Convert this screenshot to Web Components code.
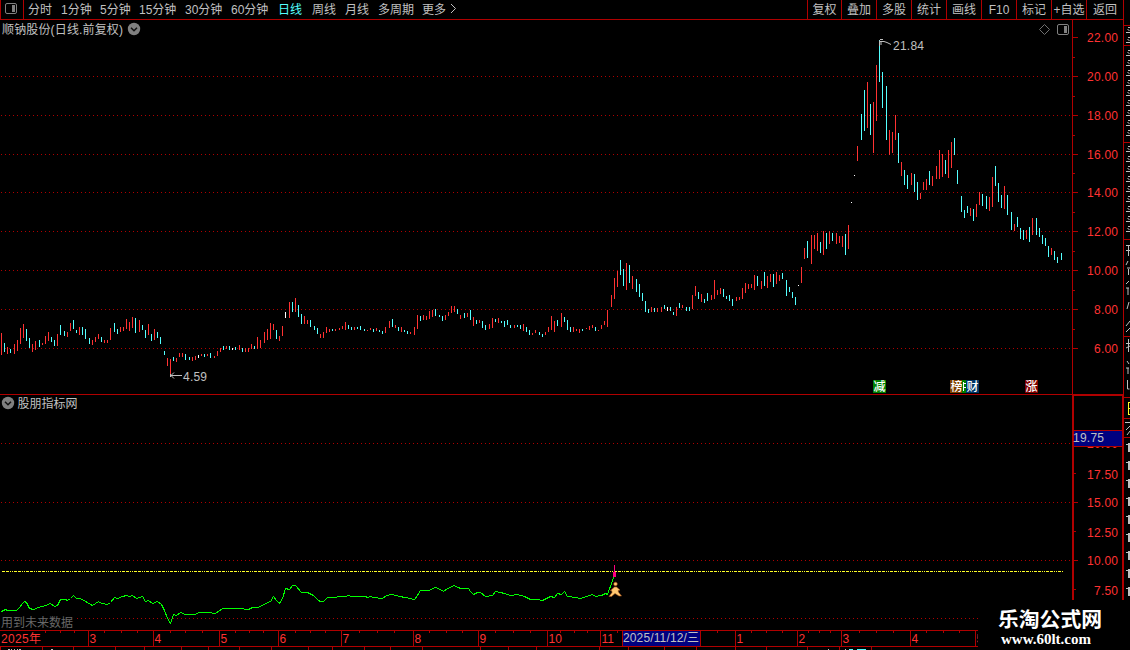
<!DOCTYPE html>
<html lang="zh-CN">
<head>
<meta charset="utf-8">
<title>顺钠股份</title>
<style>
    html, body {
        margin: 0;
        background: #000;
    }

    body {
        width: 1130px;
        height: 650px;
        overflow: hidden;
        color: #c0c0c0;
        font: 12px/16px "Liberation Sans", "Noto Sans CJK SC", sans-serif;
    }
</style>
</head>
<body>
<stock-terminal></stock-terminal>

<script>
// every chart svg uses page coordinates, the viewBox does the offset
const SVG_STYLE = `
    :host { display: block; overflow: hidden; }
    svg { display: block; }
    text { font: 12px "Liberation Sans", "Noto Sans CJK SC", sans-serif; fill: #c0c0c0; }
    .crisp { shape-rendering: crispEdges; }
    .axis { fill: #ff3232; }
`;

const RED = '#b00000';

// colour (r up, c down, w flat), x, top, bottom
const BARS = `
r1,333,355 c4,343,352 r7,347,354 c10,349,353 r14,344,354 r17,340,351 r20,328,344 r23,324,338
c26,329,341 c29,338,348 r32,344,352 r35,341,350 c39,340,347 r42,343,345 r45,336,344 r48,332,341
c51,337,342 c54,340,346 r57,334,346 c60,325,335 c64,331,336 r67,332,337 r70,323,331 c73,320,329
c76,330,333 r79,327,335 c82,327,335 c85,329,339 c89,338,344 r92,340,345 r95,337,342 r98,334,339
c101,337,342 r104,340,343 r107,340,343 r110,328,340 c114,323,332 c117,329,334 r120,327,332 r123,327,331
r126,319,329 r129,322,331 r132,317,328 c135,318,333 r139,320,332 c142,325,330 c145,330,338 r148,324,335
c151,334,341 r154,329,340 c157,332,338 c160,337,344 c164,351,355 r167,358,366 r170,359,374 c173,357,361
r176,358,362 r179,353,357 r182,353,357 c185,354,360 c189,357,360 r192,357,361 r195,356,360 w198,355,358
r201,354,356 c204,354,357 r207,354,356 c210,353,358 r214,356,358 r217,351,356 r220,348,352 c223,346,350
r226,346,349 c229,346,350 w232,348,350 c235,347,350 r239,345,350 c242,348,352 r245,348,352 r248,348,352
r251,344,349 c254,346,349 r257,337,349 r260,340,348 r264,332,343 r267,329,340 r270,323,339 r273,324,330
c276,330,339 r279,336,341 r282,326,336 w285,312,318 r289,302,318 c292,302,312 r295,298,312 c298,305,317
c301,314,324 r304,316,324 r307,320,324 c310,320,327 c314,326,330 c317,328,334 r320,334,338 r323,332,338
r326,327,333 r329,329,332 c332,329,331 r335,329,331 r339,328,330 r342,326,329 r345,322,330 c348,325,329
c351,327,330 r354,327,330 c357,327,329 c360,326,330 c364,329,331 r367,330,331 r370,328,330 c373,329,332
r376,328,331 c379,330,332 c382,331,334 r385,327,333 r389,321,328 c392,319,327 r395,325,328 c398,327,331
r401,327,332 c404,330,332 c407,331,334 r410,332,334 r414,327,335 r417,315,329 c420,316,321 r423,315,320
r426,316,320 r429,311,319 r432,310,317 c435,309,316 c439,315,317 c442,316,321 r445,315,320 r448,312,316
r451,306,313 r454,306,312 c457,309,314 r460,315,319 c464,313,318 r467,313,317 c470,310,320 r473,317,326
c476,320,324 r479,320,323 c482,321,328 c485,325,330 r489,324,329 r492,318,328 c495,319,322 r498,318,323
c501,321,323 c504,321,327 c507,320,325 c510,325,328 r514,325,328 c517,325,327 c520,325,329 r523,324,331
c526,327,332 c529,330,335 r532,333,335 r535,330,333 c539,332,335 c542,334,337 r545,332,335 r548,327,332
r551,316,330 r554,321,332 c557,320,326 r561,313,327 c564,317,322 c567,320,330 c570,327,332 r573,327,332
r576,329,331 r579,329,333 c582,329,331 r586,328,329 r589,326,330 r592,325,328 c595,327,331 r598,330,331
r601,325,329 r604,321,325 r607,310,327 r611,295,307 r614,278,299 r617,271,287 c620,260,275 c623,269,286
r626,263,290 c629,265,283 r632,276,289 c636,279,292 c639,284,297 c642,293,301 c645,301,312 c648,309,313
r651,307,312 c654,308,312 r657,308,312 r661,307,312 c664,305,309 w667,307,311 c670,307,311 c673,312,315
r676,307,316 c679,303,308 r682,305,308 c686,307,311 c689,307,311 r692,295,309 r695,286,296 c698,292,299
r701,294,302 c704,299,303 c707,293,301 r711,295,300 r714,280,299 r717,290,295 r720,288,294 c723,289,297
c726,296,299 c729,295,301 c732,299,306 r736,297,301 r739,297,300 r742,288,299 r745,283,293 r748,284,289
r751,284,288 r754,275,290 c757,276,286 r761,281,289 c764,272,286 r767,276,288 r770,274,282 c773,274,287
r776,272,284 r779,275,281 c782,273,279 c786,280,296 c789,287,292 c792,292,298 c795,297,305 w798,285,286
r801,267,283 r804,248,259 c807,241,258 r811,235,264 r814,235,249 r817,233,251 c820,242,253 r823,231,255
c826,233,249 r829,231,244 c832,233,241 r836,233,244 r839,236,243 r842,236,247 c845,234,255 r848,225,249
w851,202,203 w854,175,176 r857,146,161 c861,114,140 c864,90,131 r867,82,128 c870,104,135 r873,102,153
r876,65,121 c879,40,82 c882,72,108 c886,86,140 r889,130,155 r892,132,153 r895,115,140 c898,133,163
r901,162,176 c904,170,185 c907,175,189 r911,173,185 c914,174,192 c917,182,200 r920,193,199 r923,182,190
r926,179,190 c929,171,185 r932,176,186 r936,166,179 r939,150,179 r942,154,177 c945,160,174 r948,150,178
r951,142,168 c954,138,155 c957,170,184 c961,196,212 c964,210,218 c967,206,213 r970,208,216 c973,209,221
r976,204,217 r979,192,205 c982,194,206 c986,196,209 r989,197,211 r992,177,207 c995,166,186 c998,183,202
c1001,195,208 r1004,186,209 c1007,195,215 c1011,212,230 r1014,224,231 c1017,217,227 c1020,228,239
c1023,230,240 r1026,230,239 c1029,227,242 r1032,218,235 c1036,218,235 c1039,228,237 c1042,235,244
c1045,238,246 c1048,246,257 r1051,248,255 c1054,251,260 c1057,257,263 c1061,253,260`;

// line of the indicator, in thirds of a pixel below y = 560
const LINE_A = '3,154 15,148 21,151 48,151 57,142 66,129 72,123 80,128 88,144 99,149 114,141 136,136 150,129 164,139 172,135 180,118 195,118 202,122 211,114 220,105 229,114 241,115 256,123 277,136 295,124 304,130 322,133 331,128 343,112 352,115 366,110 379,105 388,109 397,106 408,115 426,109 436,124 444,121 456,130 472,124 483,134 492,150 502,175 511,190 520,163 530,166 541,156 556,162 586,163 596,157 625,157 646,160 667,146 715,146 745,148 757,142 775,142 790,132 810,123 820,108 828,122 838,130 848,115 856,86 868,88 878,76 887,76 904,97 922,97 940,106 955,121';
const LINE_B = '0,124 10,124 22,112 46,112 55,109 76,109 85,106 95,109 136,109 142,112 150,109 160,113 187,115 200,107 218,103 238,108 255,113 283,118 292,106 301,92 324,90 346,82 355,84 369,95 382,86 403,76 412,83 423,86 444,86 452,93 461,104 471,97 480,98 496,109 518,106 527,95 540,98 553,99 570,106 592,103 612,109 632,118 652,117 668,122 690,109 703,112 711,100 724,103 734,95 742,110 765,112 780,115 800,109 817,104 826,109 845,106 856,100 862,103 873,70 881,52';

const line = (points, dx) => points.split(' ').map(p => {
    const [x, y] = p.split(',').map(Number);
    return `${Math.floor(x / 3) + dx + .5},${Math.floor(y / 3) + 560.5}`;
}).join(' ');

const dotted = (y, end = 1072) =>
    `<path class="crisp" d="M1 ${y + .5}H${end}" stroke="${RED}" stroke-dasharray="1 3"/>`;

const rect = (x, y, w, h, fill = RED) =>
    `<rect class="crisp" x="${x}" y="${y}" width="${w}" height="${h}" fill="${fill}"/>`;

const foldIcon = (x, y) => `
    <circle cx="${x}" cy="${y}" r="6.2" fill="#808080"/>
    <path d="M${x - 3} ${y - 1.3}l3 3 3-3" fill="none" stroke="#111" stroke-width="1.5"/>`;

function define(name, html) {
    customElements.define(name, class extends HTMLElement {
        constructor() {
            super();
            this.attachShadow({ mode: 'open' }).innerHTML = html;
        }
    });
}

define('tool-item', `
    <style>
        :host {
            display: block;
            flex: none;
            box-sizing: border-box;
            height: 19px;
            line-height: 21px;
            white-space: nowrap;
        }

        :host([active]) { color: #54ffff; }

        :host([boxed]) {
            border-left: 1px solid #b00000;
            text-align: center;
        }
    </style>
    <slot></slot>
`);

const PERIODS = [
    ['分时', 33], ['1分钟', 39], ['5分钟', 39], ['15分钟', 46], ['30分钟', 46], ['60分钟', 47],
    ['日线', 34], ['周线', 33], ['月线', 33], ['多周期', 44], ['更多', 27]
];
const ACTIONS = [
    ['复权', 34], ['叠加', 35], ['多股', 35], ['统计', 35], ['画线', 35], ['F10', 35],
    ['标记', 35], ['+自选', 35], ['返回', 37]
];

define('tool-bar', `
    <style>
        :host {
            display: flex;
            box-sizing: border-box;
            height: 20px;
            border-bottom: 1px solid #b00000;
        }

        .toggle {
            box-sizing: border-box;
            width: 24px;
            height: 19px;
            margin-right: 4px;
            border: solid #b00000;
            border-width: 0 1px;
        }

        .spacer { flex: 1; }
        svg { display: block; }
    </style>
    <div class="toggle">
        <svg width="22" height="19">
            <rect x="4.5" y="3.5" width="11" height="10" rx="1.5" fill="none" stroke="#808080"/>
            <rect x="11" y="5" width="3" height="7" fill="#808080"/>
        </svg>
    </div>
    ${PERIODS.map(([t, w]) => `<tool-item style="width:${w}px"${t === '日线' ? ' active' : ''}>${t}</tool-item>`).join('')}
    <svg width="10" height="19"><path d="M2 4l4.5 4.5L2 13" fill="none" stroke="#c0c0c0"/></svg>
    <span class="spacer"></span>
    ${ACTIONS.map(([t, w]) => `<tool-item boxed style="width:${w}px">${t}</tool-item>`).join('')}
`);

const COLORS = { r: '#ff3232', c: '#54ffff', w: '#fff' };
const GRID = [76, 115, 154, 192, 231, 270, 309, 348];

const badge = (x, w, fill, ch) => `
    ${rect(x, 380, w, 13, fill)}
    <text x="${x + .5}" y="391" style="fill:#fff;font-weight:500">${ch}</text>`;

define('price-pane', `
    <style>${SVG_STYLE}</style>
    <svg width="1072" height="375" viewBox="0 20 1072 375">
        ${GRID.map(y => dotted(y)).join('')}
        ${BARS.trim().split(/\s+/).map(b => {
            const [x, top, bottom] = b.slice(1).split(',').map(Number);
            return rect(x, top, 1, bottom - top, COLORS[b[0]]);
        }).join('')}
        <text x="2" y="33.5" textLength="121">顺钠股份(日线.前复权)</text>
        ${foldIcon(134, 29)}
        <path d="M1044.5 24.5l5 5-5 5-5-5z" fill="none" stroke="#707070"/>
        <rect x="1057.5" y="24.5" width="11" height="10" rx="1.5" fill="none" stroke="#808080"/>
        ${rect(1064, 26, 3, 7, '#808080')}
        <path d="M879.5 46v-5.5M880 39.5h3M880 41.5h4l3 1 4 2M881 42v3" fill="none" stroke="#c0c0c0"/>
        <text x="893" y="50" textLength="31">21.84</text>
        <path d="M182 375.5H171M174 372.5l-3 3 3 3M170.5 374v3" fill="none" stroke="#c0c0c0"/>
        <text x="183" y="381" textLength="24">4.59</text>
        ${badge(873, 13, '#008000', '减')}
        ${badge(950, 12, '#804000', '榜')}
        ${rect(962, 380, 4, 13, '#008000')}
        <path class="crisp" d="M963.5 382v9M963 383.5h3M963 387.5h3" stroke="#fff"/>
        ${badge(966, 13, '#003466', '财')}
        ${badge(1025, 13, '#800000', '涨')}
        ${rect(0, 394, 1072, 1)}
    </svg>
`);

define('price-axis', `
    <style>${SVG_STYLE}</style>
    <svg width="52" height="375" viewBox="1072 20 52 375">
        ${rect(1072, 20, 1, 375)}
        ${rect(1123, 20, 1, 375)}
        ${[37, ...GRID].map((y, i) => `
            ${rect(1073, y, 5, 1)}
            <text class="axis" x="${i > 6 ? 1094 : 1087}" y="${y + 5}" textLength="${i > 6 ? 24 : 31}">${22 - i * 2}.00</text>
        `).join('')}
        ${[57, 96, 135, 173, 212, 251, 290, 329].map(y => rect(1073, y, 2, 1)).join('')}
        ${rect(1072, 394, 52, 1)}
    </svg>
`);

define('indicator-pane', `
    <style>${SVG_STYLE}</style>
    <svg width="1072" height="235" viewBox="0 395 1072 235">
        ${foldIcon(8, 403)}
        <text x="17.5" y="407.5">股朋指标网</text>
        ${[443, 502, 560, 618].map(y => dotted(y)).join('')}
        ${rect(0, 614, 74, 15, '#000')}
        <text x="1" y="627" style="fill:#686868">用到未来数据</text>
        <path class="crisp" d="M2 571.5H1063" stroke="#ffff28" stroke-dasharray="3 1 3 1 1 1 1 1"/>
        <polyline class="crisp" points="${line(LINE_A, 0)} ${line(LINE_B, 320)}" fill="none" stroke="#00ff00"/>
        ${rect(614, 565, 1, 7, '#ff0080')}
        ${rect(613, 572, 3, 5, '#ff0080')}
        <g stroke="#a85018" stroke-width=".6" fill="#ffc870">
            <circle cx="615.5" cy="584" r="1.8"/>
            <path d="M614.5 587h2l3.5 3-2 .8.8 1.700 2.700 3.500h-2.500l-4-2.500-3.500 3h-2.500l3-4-.2-1.700-1.300-.3z"/>
        </g>
    </svg>
`);

define('indicator-axis', `
    <style>${SVG_STYLE}</style>
    <svg width="52" height="235" viewBox="1072 395 52 235">
        <text class="axis" x="1087" y="448" textLength="31">20.00</text>
        ${rect(1072, 395, 2, 205)}
        ${rect(1072, 395, 52, 1)}
        ${rect(1122, 395, 2, 205)}
        ${rect(1074, 430, 48, 17)}
        ${rect(1074, 431, 48, 15, '#000080')}
        <text x="1073" y="442" textLength="31">19.75</text>
        ${[[473, '17.50', 2, 479], [502, '15.00', 4, 507], [531, '12.50', 2, 537], [560, '10.00', 4, 565], [589, '7.50', 2, 595]].map(([y, t, w, base]) => `
            ${rect(1074, y, w, 1)}
            <text class="axis" x="${t.length > 4 ? 1087 : 1094}" y="${base}" textLength="${t.length > 4 ? 31 : 24}">${t}</text>
        `).join('')}
    </svg>
`);

const MONTHS = [
    [88, '3'], [153, '4'], [219, '5'], [278, '6'], [341, '7'], [413, '8'], [478, '9'], [547, '10'], [600, '11'],
    [735, '1'], [797, '2'], [841, '3'], [910, '4'], [975, '5']
];
const WEEKS = [
    45, 60, 74, 104, 121, 137, 170, 185, 202, 235, 249, 263, 295, 310, 325, 359, 377, 394, 429, 446, 462,
    495, 513, 530, 560, 574, 587, 617, 717, 751, 766, 782, 808, 819, 830, 859, 876, 893, 926, 943, 959
];
const TABS = [
    0, 42, 73, 115, 144, 181, 208, 239, 271, 308, 332, 364, 390, 422, 480, 508, 536, 599, 628, 664, 696,
    735, 766, 807, 839, 871
];

define('time-axis', `
    <style>${SVG_STYLE}</style>
    <svg width="978" height="20" viewBox="0 630 978 20">
        ${rect(0, 630, 978, 1)}
        ${rect(0, 646, 978, 1)}
        <text class="axis" x="1" y="643" textLength="40">2025年</text>
        ${MONTHS.map(([x, t]) => `${rect(x, 630, 1, 16)}<text class="axis" x="${x + 1.5}" y="643">${t}</text>`).join('')}
        ${WEEKS.map(x => rect(x, 631, 1, 2)).join('')}
        ${TABS.map(x => rect(x, 647, 1, 3)).join('')}
        ${rect(622, 630, 79, 17)}
        ${rect(623, 631, 77, 15, '#000080')}
        <text x="623" y="642" textLength="76">2025/11/12/三</text>
        <path class="crisp" d="M8 649.5h2m1 0h1m2 0h1m2 0h1m1 0h2m30 0h2M828 649.5h1m16 0h1" stroke="#c0c0c0"/>
        <path class="crisp" d="M849 649.5h4m4 0h9" stroke="#54ffff"/>
    </svg>
`);

// the quote list is cut off by the window edge, only slivers of it are left
const strokes = (from, to) => {
    let d = '';
    for (let y = from, i = 0; y < to; y += 5, i++) {
        d += i % 2 ? `M1126 ${y + .5}h4` : `M1128 ${y + .5}h2M1127.5 ${y + 2}l2 2`;
    }
    return d;
};

define('quote-edge', `
    <style>${SVG_STYLE}</style>
    <svg width="6" height="650" viewBox="1124 0 6 650">
        ${[25, 45, 142, 239, 336, 397, 418, 437].map(y => rect(1124, y, 6, 1)).join('')}
        <path d="${strokes(27, 43)}${strokes(50, 140)}${strokes(146, 236)}" fill="none" stroke="#c0c0c0"/>
        <path d="M1126 245.5h4M1126 250.5h4M1128.5 245v11M1128 261l-2 4M1127 268h3M1128.5 269v6M1129 281l-3 3M1126 288h3M1128 288v7M1129 302l-2 7M1130 321l-4 5M1126 332l4-4M1128.5 339v13M1126 343.5h4M1126 348l4-2M1127 361l2 3M1126 368h3M1128 368v6M1127.5 380v9h2" fill="none" stroke="#c0c0c0"/>
        <path class="crisp" d="M1130 402.5h-1.5v12h1.5M1128 408.5h2" fill="none" stroke="#ffff28"/>
        <path d="M1125 422.5h5M1130 426l-4 4M1130 431l-3 4" fill="none" stroke="#c0c0c0"/>
        ${[443, 461, 479, 497, 515, 533, 551, 569, 587].map(y =>
            `${rect(1128, y, 2, 9, '#c0c0c0')}${rect(1126, y + 1, 2, 1, '#c0c0c0')}`).join('')}
    </svg>
`);

define('site-mark', `
    <style>
        :host {
            position: absolute;
            right: 0;
            bottom: 0;
            box-sizing: border-box;
            width: 152px;
            height: 50px;
            padding: 7px 0 0 20px;
            background: #000;
            color: #fff;
            white-space: nowrap;
        }

        .name {
            font: bold 20.8px/23px "Noto Sans CJK SC", sans-serif;
        }

        .url {
            padding-left: 3px;
            font: bold 15px/18px "Liberation Serif", serif;
        }
    </style>
    <div class="name">乐淘公式网</div>
    <div class="url">www.60lt.com</div>
`);

define('stock-terminal', `
    <style>
        :host {
            position: relative;
            display: flex;
            width: 1130px;
            height: 650px;
            overflow: hidden;
            background: #000;
        }

        main {
            display: grid;
            grid-template: 20px 375px 235px 20px / 1072px 52px;
        }

        tool-bar, time-axis { grid-column: 1 / -1; }
        tool-bar { border-right: 1px solid #b00000; }
    </style>
    <main>
        <tool-bar></tool-bar>
        <price-pane></price-pane>
        <price-axis></price-axis>
        <indicator-pane></indicator-pane>
        <indicator-axis></indicator-axis>
        <time-axis></time-axis>
    </main>
    <quote-edge></quote-edge>
    <site-mark></site-mark>
`);
</script>
</body>
</html>
